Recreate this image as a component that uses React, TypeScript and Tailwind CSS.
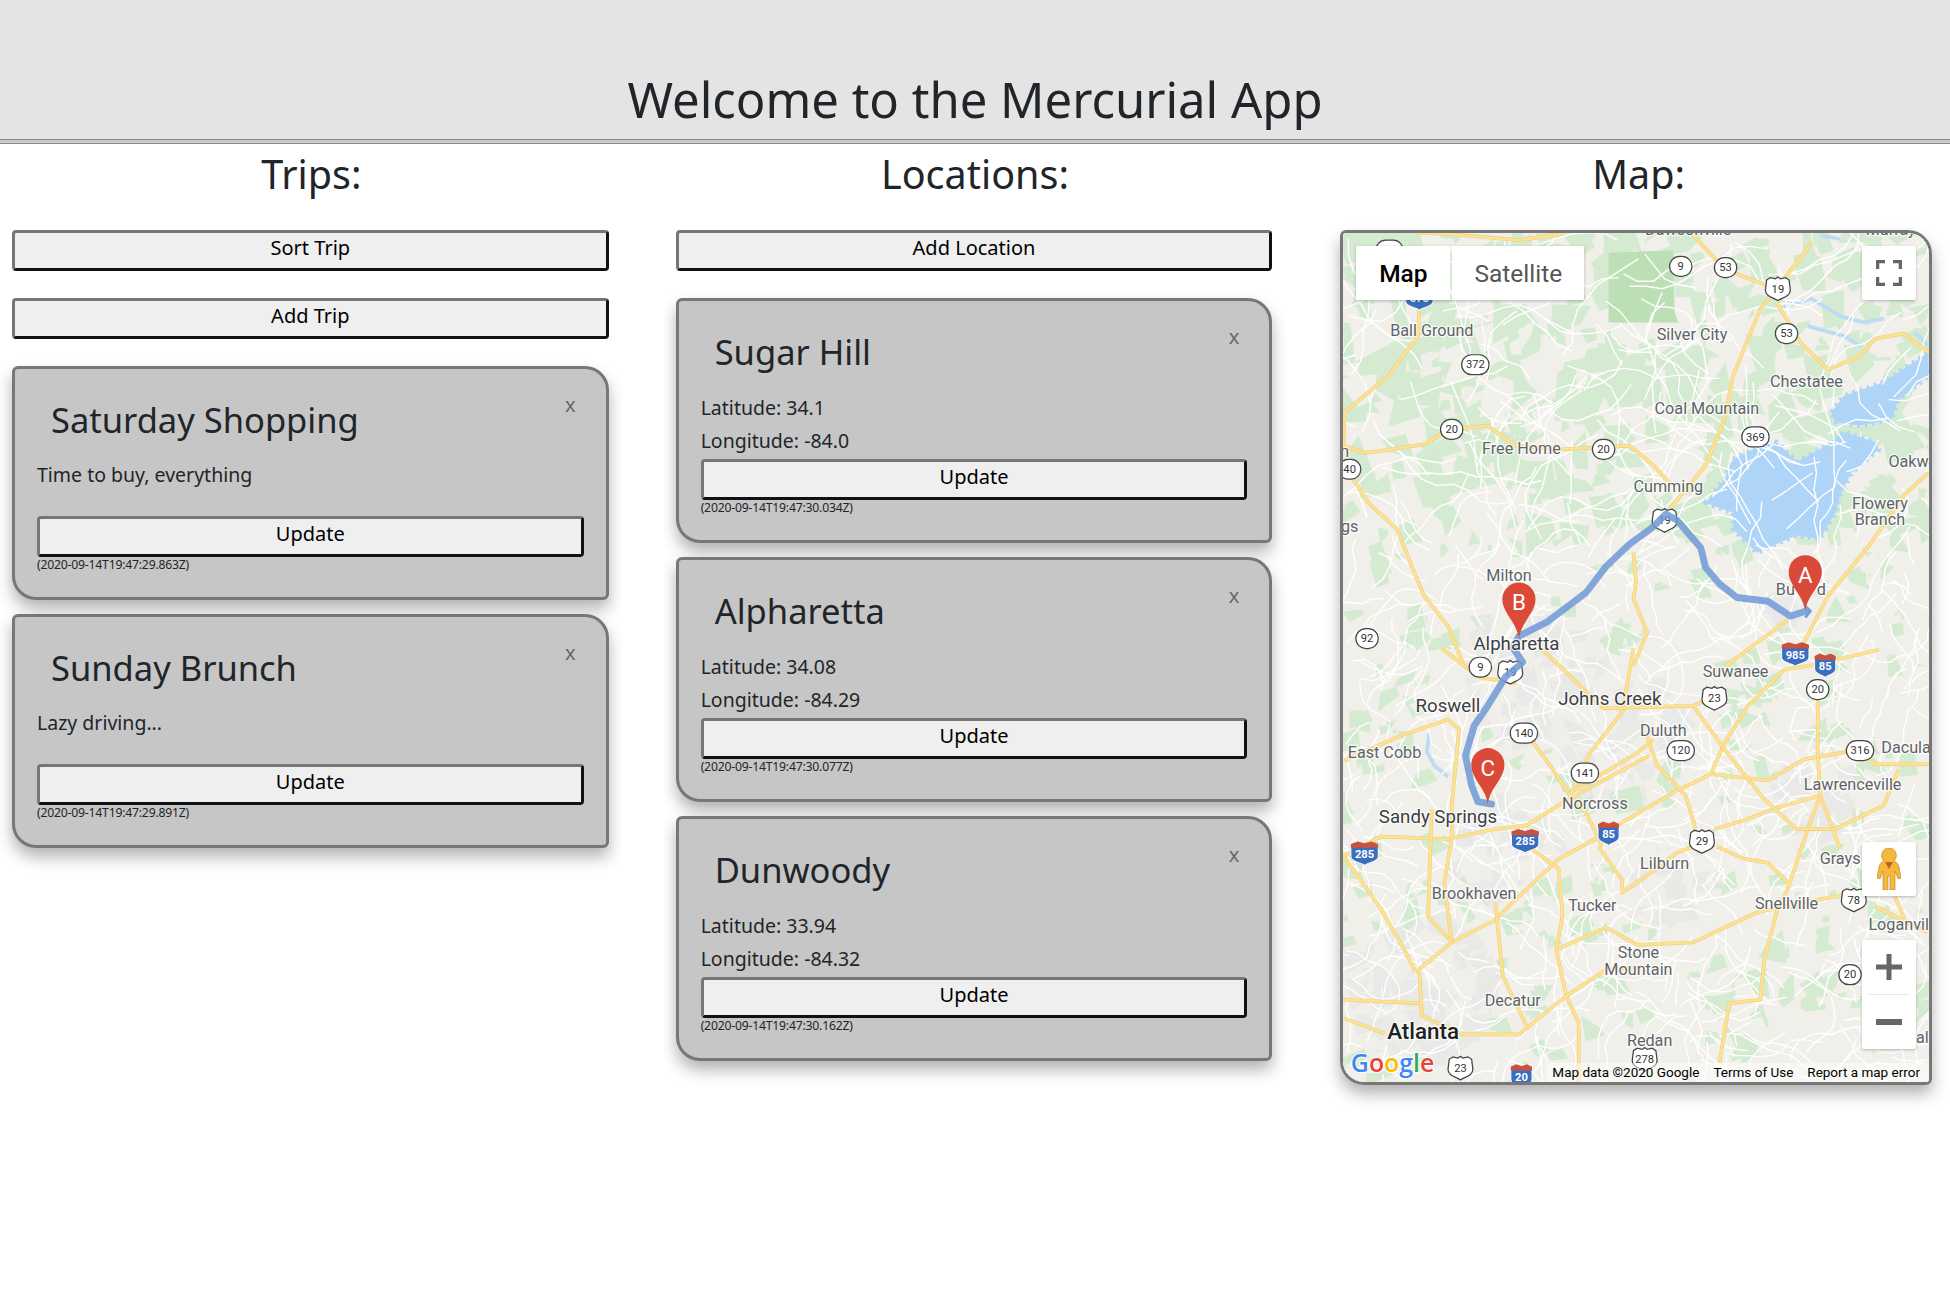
import { Fragment } from "react";

const font = "[font-family:'Noto_Sans',sans-serif]";

const trips = [
  { title: "Saturday Shopping", text: "Time to buy, everything", stamp: "(2020-09-14T19:47:29.863Z)" },
  { title: "Sunday Brunch", text: "Lazy driving...", stamp: "(2020-09-14T19:47:29.891Z)" },
];

const locations = [
  { title: "Sugar Hill", lat: "34.1", lng: "-84.0", stamp: "(2020-09-14T19:47:30.034Z)" },
  { title: "Alpharetta", lat: "34.08", lng: "-84.29", stamp: "(2020-09-14T19:47:30.077Z)" },
  { title: "Dunwoody", lat: "33.94", lng: "-84.32", stamp: "(2020-09-14T19:47:30.162Z)" },
];

// map drawing is in the coordinates of the 1568px wide picture
const highways = [
  "1142,244 1141,271 1117,303 1082,332 1081,359",
  "1081,359 1098,365 1146,358 1165,346 1197,343 1219,359 1257,362 1311,359 1330,375 1343,389",
  "1343,410 1372,375 1387,338 1394,303 1416,249 1429,233",
  "1429,233 1407,225 1387,217 1362,190",
  "1429,244 1448,276 1470,298 1496,287 1508,273 1531,269 1551,284",
  "1429,233 1457,196",
  "1139,188 1165,189 1222,194 1257,189",
  "1089,386 1101,405 1124,426 1138,461 1146,480 1165,504 1178,536",
  "1314,445 1316,469 1314,482 1325,509 1314,536",
  "1551,381 1531,399 1505,437 1470,480 1448,523",
  "1438,499 1388,536",
  "1511,523 1460,535 1435,539 1406,568 1387,598 1376,623 1349,636 1301,664 1285,674 1254,691 1222,721 1203,740 1168,758 1139,782",
  "1081,689 1111,673 1165,675 1203,667 1228,664 1257,646 1286,630 1327,608",
  "1228,680 1254,699 1257,737 1252,764 1260,801 1270,823 1270,871",
  "1252,764 1292,746 1317,760 1362,758 1413,734 1435,729 1492,718",
  "1142,782 1144,817 1177,832 1222,832 1260,801 1292,780 1320,778",
  "1081,819 1114,831",
  "1081,804 1142,807",
  "1553,615 1508,615 1496,603 1451,611 1422,628 1378,623",
  "1462,555 1462,603 1464,640 1454,667 1438,715 1429,734 1419,772 1416,804 1391,807 1383,855",
  "1362,681 1349,686 1324,705 1305,718 1305,708 1286,681",
  "1381,681 1403,691 1422,694 1438,710",
  "1379,667 1403,660 1426,651 1464,640",
  "1324,590 1333,616 1356,640 1364,667",
  "1228,590 1247,616 1263,640 1276,654 1289,681",
  "1263,638 1317,606 1330,595",
  "1082,612 1127,592 1165,579 1174,587 1168,648 1168,675 1162,710 1168,758",
  "1152,651 1149,737 1168,758",
  "1081,689 1111,731 1130,764 1139,782",
  "1203,726 1209,785 1228,825",
  "1314,522 1305,573 1279,606 1263,640",
  "1362,568 1387,603 1419,643 1445,667 1476,667 1515,648 1527,619",
  "1464,640 1480,683",
  "1524,721 1534,745",
  "1508,729 1550,750",
  "1160,522 1190,545 1220,550",
  "1240,522 1290,570 1362,568 1381,560",
];

const route =
  "1452,492 1440,496 1422,484 1397,481 1383,470 1372,457 1368,441 1349,419 1340,414 1329,425 1311,438 1292,456 1276,477 1244,501 1222,512 1217,521 1225,533 1211,545 1197,568 1186,584 1179,608 1184,632 1189,645 1200,647";

const labels: [string, number, number, number?][] = [
  ["Dawsonville", 1358, 190], ["Murrayville", 1532, 190], ["n", 1082, 368],
  ["Ball Ground", 1152, 271], ["Silver City", 1361, 274], ["Chestatee", 1453, 312], ["Coal Mountain", 1373, 334],
  ["Free Home", 1224, 366], ["Cumming", 1342, 396], ["Oakw", 1535, 376], ["Flowery", 1512, 410], ["Branch", 1512, 423],
  ["gs", 1086, 428], ["Milton", 1214, 468], ["Bu", 1436, 479], ["d", 1465, 479], ["Alpharetta", 1220, 523, 15],
  ["Suwanee", 1396, 545], ["Johns Creek", 1295, 567, 15], ["Roswell", 1165, 573, 15], ["Duluth", 1338, 592],
  ["East Cobb", 1114, 610], ["Dacula", 1533, 606], ["Lawrenceville", 1490, 636], ["Norcross", 1283, 651],
  ["Sandy Springs", 1157, 662, 15], ["Lilburn", 1339, 699], ["Grays", 1480, 695], ["Brookhaven", 1186, 723],
  ["Snellville", 1437, 731], ["Tucker", 1281, 733], ["Loganvil", 1527, 748], ["Stone", 1318, 771], ["Mountain", 1318, 784],
  ["Decatur", 1217, 809], ["Redan", 1327, 841], ["al", 1546, 839],
];

const stateRoutes: [string, number, number][] = [
  ["9", 1352, 215], ["53", 1388, 216], ["53", 1437, 269], ["372", 1187, 294], ["20", 1168, 346], ["20", 1290, 362],
  ["369", 1412, 352], ["40", 1086, 378], ["92", 1100, 514], ["9", 1191, 537], ["20", 1462, 555], ["140", 1226, 590],
  ["120", 1352, 604], ["316", 1496, 604], ["141", 1275, 622], ["20", 1488, 784], ["515", 1118, 202],
];

const usRoutes: [string, number, number][] = [
  ["19", 1430, 233], ["19", 1339, 419], ["19", 1215, 541], ["23", 1379, 562], ["29", 1369, 677], ["78", 1491, 724],
  ["23", 1175, 859], ["278", 1323, 852],
];

const interstates: [string, number, number][] = [
  ["575", 1142, 240], ["985", 1444, 526], ["85", 1468, 535], ["285", 1227, 676], ["285", 1098, 686], ["85", 1294, 670],
  ["20", 1224, 865],
];

const urban = [
  [1225, 545, 55], [1145, 800, 60], [1300, 590, 55], [1210, 680, 45], [1440, 480, 28], [1460, 640, 35], [1340, 710, 35],
];

function seeded(seed: number) {
  let s = seed;
  return () => {
    s = (s * 1664525 + 1013904223) % 4294967296;
    return s / 4294967296;
  };
}

const rnd = seeded(42);

const patches = Array.from({ length: 1500 }, () => {
  const x = 1078 + rnd() * 476;
  const y = 186 + rnd() * 686;
  const north = y < 430;
  const size = north ? 6 + rnd() * 13 : 4 + rnd() * 9;
  const pts = Array.from({ length: 4 }, (_, i) => {
    const a = (i / 4) * 6.283 + rnd() * 1.1;
    const r = size * (0.5 + rnd());
    return `${(x + Math.cos(a) * r).toFixed(1)},${(y + Math.sin(a) * r).toFixed(1)}`;
  }).join(" ");
  const inTown = urban.some(([ux, uy, ur]) => Math.hypot(x - ux, y - uy) < ur);
  const green = rnd() < (north ? 0.74 : x > 1380 ? 0.34 : 0.26);
  return { pts, fill: inTown ? "#e9e9e8" : green ? "#d5ebd1" : "#f1f0ea" };
});

const lanes = Array.from({ length: 620 }, () => {
  let x = 1078 + rnd() * 476;
  let y = 186 + Math.pow(rnd(), 0.75) * 686;
  let a = rnd() * 6.283;
  const step = y < 430 ? 13 : 9;
  const pts = [`${x.toFixed(0)},${y.toFixed(0)}`];
  const count = 3 + Math.floor(rnd() * 7);
  for (let i = 0; i < count; i++) {
    a += (rnd() - 0.5) * 1.2;
    x += Math.cos(a) * step;
    y += Math.sin(a) * step;
    pts.push(`${x.toFixed(0)},${y.toFixed(0)}`);
  }
  return pts.join(" ");
});

function Shield({ label, x, y, kind }: { label: string; x: number; y: number; kind: "state" | "us" | "i" }) {
  if (kind === "state") {
    const w = label.length > 2 ? 22 : 18;
    return (
      <g>
        <rect x={x - w / 2} y={y - 8} width={w} height={16} rx={8} fill="#fff" stroke="#444" strokeWidth={1} />
        <text x={x} y={y + 3} textAnchor="middle" fontSize={9} fill="#333">{label}</text>
      </g>
    );
  }
  if (kind === "us") {
    return (
      <g transform={`translate(${x} ${y})`}>
        <path d="M-9 -7 L-6 -9 L-2 -8 L0 -9.5 L2 -8 L6 -9 L9 -7 L10 1 C10 6 4 7 0 9.5 C-4 7 -10 6 -10 1 Z" fill="#fff" stroke="#444" strokeWidth={1} />
        <text y={3} textAnchor="middle" fontSize={9} fill="#333">{label}</text>
      </g>
    );
  }
  const half = label.length > 2 ? 11 : 8.5;
  return (
    <g transform={`translate(${x} ${y})`}>
      <path d={`M${-half} -7 L${half} -7 L${half} 3 C${half} 7 3 8 0 10 C-3 8 ${-half} 7 ${-half} 3 Z`} fill="#3a6ebf" stroke="#fff" strokeWidth={0.8} />
      <path d={`M${-half} -4 L${-half} -7 L${-half / 2} -9 L0 -7.5 L${half / 2} -9 L${half} -7 L${half} -4 Z`} fill="#c9523f" />
      <text y={4} textAnchor="middle" fontSize={9} fontWeight={700} fill="#fff">{label}</text>
    </g>
  );
}

function Pin({ x, y, letter }: { x: number; y: number; letter: string }) {
  return (
    <g transform={`translate(${x} ${y})`}>
      <path d="M0 0 C-2 -14 -13.3 -20 -13.3 -31.7 A13.3 13.3 0 1 1 13.3 -31.7 C13.3 -20 2 -14 0 0 Z" fill="#db4a39" />
      <text y={-23} textAnchor="middle" fontSize={18} fill="#fff">{letter}</text>
    </g>
  );
}

function MapDrawing() {
  return (
    <svg viewBox="1080.7 188.2 470.4 682" className="block w-full h-full" style={{ fontFamily: "Roboto, sans-serif" }}>
      <rect x={1070} y={180} width={490} height={700} fill="#f0efe9" />
      {patches.map((p, i) => (
        <polygon key={i} points={p.pts} fill={p.fill} />
      ))}
      <path d="M1294 204 L1346 202 L1347 252 L1350 260 L1294 260 Z" fill="#bcdfb5" />
      <g fill="#aed4f7" stroke="#aed4f7" strokeWidth={4} strokeDasharray="2 4" strokeLinejoin="round">
        <polygon points="1372,405 1387,386 1394,370 1416,359 1429,356 1445,372 1464,362 1483,348 1508,356 1511,362 1489,381 1480,399 1476,413 1464,434 1445,431 1413,445 1394,426 1394,413" />
        <polygon points="1473,332 1483,319 1515,308 1551,284 1551,303 1527,322 1521,338 1496,343 1476,340" />
      </g>
      <g fill="none" stroke="#bcdcf5" strokeWidth={3}>
        <polyline points="1435,247 1457,241 1480,255 1499,260 1515,257" />
        <polyline points="1454,263 1483,271 1496,279" />
        <polyline points="1540,268 1551,279" />
        <polyline points="1464,190 1480,193" />
        <polyline points="1150,590 1148,605 1154,616 1165,625" />
      </g>
      {lanes.map((pts, i) => (
        <polyline key={i} points={pts} fill="none" stroke="#fff" strokeWidth={1.1} />
      ))}
      {highways.map((pts, i) => (
        <Fragment key={i}>
          <polyline points={pts} fill="none" stroke="#f1cf7d" strokeWidth={3} strokeLinejoin="round" />
          <polyline points={pts} fill="none" stroke="#fde293" strokeWidth={2} strokeLinejoin="round" />
        </Fragment>
      ))}
      {stateRoutes.map(([label, x, y], i) => (
        <Shield key={i} label={label} x={x} y={y} kind="state" />
      ))}
      {usRoutes.map(([label, x, y], i) => (
        <Shield key={i} label={label} x={x} y={y} kind="us" />
      ))}
      {interstates.map(([label, x, y], i) => (
        <Shield key={i} label={label} x={x} y={y} kind="i" />
      ))}
      <polyline points={route} fill="none" stroke="#7099d6" strokeWidth={5.5} strokeLinejoin="round" strokeLinecap="round" opacity={0.85} />
      {labels.map(([label, x, y, size], i) => (
        <text
          key={i}
          x={x}
          y={y}
          textAnchor="middle"
          fontSize={size ?? 13}
          fill={size ? "#3c4043" : "#5f6368"}
          stroke="#fff"
          strokeWidth={2}
          strokeOpacity={0.75}
          paintOrder="stroke"
        >
          {label}
        </text>
      ))}
      <text x={1145} y={836} textAnchor="middle" fontSize={18} fontWeight={500} fill="#202124" stroke="#fff" strokeWidth={2} strokeOpacity={0.75} paintOrder="stroke">
        Atlanta
      </text>
      <polyline points="1452,488 1456,492 1452,497" fill="none" stroke="#6f9fe0" strokeWidth={2.4} />
      <Pin x={1452} y={492} letter="A" />
      <Pin x={1222} y={514} letter="B" />
      <Pin x={1197} y={647} letter="C" />
      <text x={1087} y={862} fontSize={20} fontWeight={600} style={{ fontFamily: "'Open Sans', sans-serif" }} stroke="#fff" strokeWidth={1.5} paintOrder="stroke">
        <tspan fill="#4285f4">G</tspan>
        <tspan fill="#ea4335">o</tspan>
        <tspan fill="#fbbc05">o</tspan>
        <tspan fill="#4285f4">g</tspan>
        <tspan fill="#34a853">l</tspan>
        <tspan fill="#ea4335">e</tspan>
      </text>
    </svg>
  );
}

function ActionButton({ label }: { label: string }) {
  return (
    <button className="block w-full h-[41px] rounded-[4px] border-[3px] border-t-[#767676] border-l-[#767676] border-r-[#111111] border-b-[#111111] bg-[#efefef] text-[20px] leading-[26px] pb-[5px] text-black">
      {label}
    </button>
  );
}

function Card({ title, stamp, tall, children }: { title: string; stamp: string; tall?: boolean; children: React.ReactNode }) {
  return (
    <div className="relative rounded-tl-[6px] rounded-br-[6px] rounded-tr-[24px] rounded-bl-[24px] border-[3px] border-[#777777] bg-[#c6c6c6] px-[22px] pt-[25px] pb-[25px] shadow-[0_9px_16px_rgba(0,0,0,0.3)] text-[#212529]">
      <span className="absolute right-[30px] top-[24px] text-[20px] leading-[24px] text-[#666666]">x</span>
      <h2 className="pl-[14px] text-[34.5px] leading-[52px]">{title}</h2>
      <div className={tall ? "mt-[13px] mb-[2px]" : "mt-[12px] mb-[24px]"}>{children}</div>
      <ActionButton label="Update" />
      <p className="mt-[1px] text-[12.2px] leading-[14px] tracking-[-0.2px]">{stamp}</p>
    </div>
  );
}

export default function App() {
  return (
    <div className={`min-h-[1300px] bg-white text-[#212529] ${font}`}>
      <header className="h-[139px] bg-[#e4e4e4] flex items-end justify-center">
        <h1 className="text-[49px] leading-[66px] pb-[7px]">Welcome to the Mercurial App</h1>
      </header>
      <div className="h-[5px] border-y border-[#8a8a8a] bg-[#c9c9c9]" />
      <main className="grid grid-cols-3 gap-[41px]">
        {/* Trips */}
        <section>
          <h3 className="text-center text-[39.5px] leading-[52px] mt-[4px] mb-[30px]">Trips:</h3>
          <div className="pl-[12px] pr-[14px] flex flex-col gap-[27px]">
            <ActionButton label="Sort Trip" />
            <ActionButton label="Add Trip" />
          </div>
          <div className="overflow-hidden pl-[12px] pr-[14px] pt-[15px] pb-[40px] flex flex-col gap-[14px] mt-[12px]">
            {trips.map((trip) => (
              <Card key={trip.title} title={trip.title} stamp={trip.stamp}>
                <p className="text-[19.5px] leading-[34px]">{trip.text}</p>
              </Card>
            ))}
          </div>
        </section>

        {/* Locations */}
        <section>
          <h3 className="text-center text-[39.5px] leading-[52px] mt-[4px] mb-[30px]">Locations:</h3>
          <div className="pl-[12px] pr-[14px]">
            <ActionButton label="Add Location" />
          </div>
          <div className="overflow-hidden pl-[12px] pr-[14px] pt-[14px] pb-[40px] flex flex-col gap-[14px] mt-[13px]">
            {locations.map((loc) => (
              <Card key={loc.title} title={loc.title} stamp={loc.stamp} tall>
                <p className="text-[19.5px] leading-[33px]">Latitude: {loc.lat}</p>
                <p className="text-[19.5px] leading-[33px]">Longitude: {loc.lng}</p>
              </Card>
            ))}
          </div>
        </section>

        {/* Map */}
        <section>
          <h3 className="text-center text-[39.5px] leading-[52px] mt-[4px] mb-[30px]">Map:</h3>
          <div className="pl-[13px] pr-[18px]">
            <div className="relative h-[855px] overflow-hidden rounded-tl-[6px] rounded-br-[6px] rounded-tr-[24px] rounded-bl-[24px] border-[3px] border-[#777777] shadow-[0_9px_16px_rgba(0,0,0,0.3)]">
              <MapDrawing />
              <div className="absolute left-[13px] top-[13px] flex h-[54px] gap-[2px] [font-family:Roboto,sans-serif] text-[24.5px] shadow-[0_1px_3px_rgba(0,0,0,0.25)]">
                <div className="w-[94px] bg-white flex items-center justify-center pt-[3px] font-medium text-black rounded-l-[2px]">Map</div>
                <div className="w-[132px] bg-white flex items-center justify-center pt-[3px] text-[#565656] rounded-r-[2px]">Satellite</div>
              </div>
              <div className="absolute right-[13px] top-[13px] w-[54px] h-[54px] bg-white rounded-[2px] shadow-[0_1px_3px_rgba(0,0,0,0.25)] flex items-center justify-center">
                <svg width="26" height="26" viewBox="0 0 26 26" fill="none" stroke="#666666" strokeWidth="3.5">
                  <path d="M1.5 9V1.5H9M17 1.5H24.5V9M24.5 17V24.5H17M9 24.5H1.5V17" />
                </svg>
              </div>
              <div className="absolute right-[13px] top-[609px] w-[54px] h-[54px] bg-white rounded-[2px] shadow-[0_1px_3px_rgba(0,0,0,0.25)] flex items-center justify-center">
                <svg width="24" height="42" viewBox="0 0 24 42">
                  <path d="M12 0a7.5 7.5 0 0 1 5 13c3 1 4 3 5 6l2 11-3 1-3-8v19h-5V28h-2v14H6V23l-3 8-3-1 2-11c1-3 2-5 5-6a7.5 7.5 0 0 1 5-13Z" fill="#f5b73c" stroke="#b57f1e" strokeWidth="0.6" />
                  <path d="M8 14h8l-4 7Z" fill="#c1602b" />
                </svg>
              </div>
              <div className="absolute right-[13px] top-[707px] w-[54px] h-[109px] bg-white rounded-[2px] shadow-[0_1px_3px_rgba(0,0,0,0.25)] flex flex-col items-center">
                <div className="h-[54px] flex items-center justify-center">
                  <svg width="26" height="26" viewBox="0 0 26 26" fill="#666666"><path d="M10.5 0h5v10.5H26v5H15.5V26h-5V15.5H0v-5h10.5Z" /></svg>
                </div>
                <div className="w-[40px] h-px bg-[#e6e6e6]" />
                <div className="h-[54px] flex items-center justify-center">
                  <svg width="26" height="6" viewBox="0 0 26 6" fill="#666666"><rect width="26" height="6" /></svg>
                </div>
              </div>
              <div className="absolute right-0 bottom-0 flex h-[19px] items-center gap-[14px] bg-white/50 pl-[6px] pr-[9px] [font-family:Roboto,sans-serif] text-[13.5px] leading-[19px] text-black whitespace-nowrap">
                <span>Map data ©2020 Google</span>
                <span>Terms of Use</span>
                <span>Report a map error</span>
              </div>
            </div>
          </div>
        </section>
      </main>
    </div>
  );
}
